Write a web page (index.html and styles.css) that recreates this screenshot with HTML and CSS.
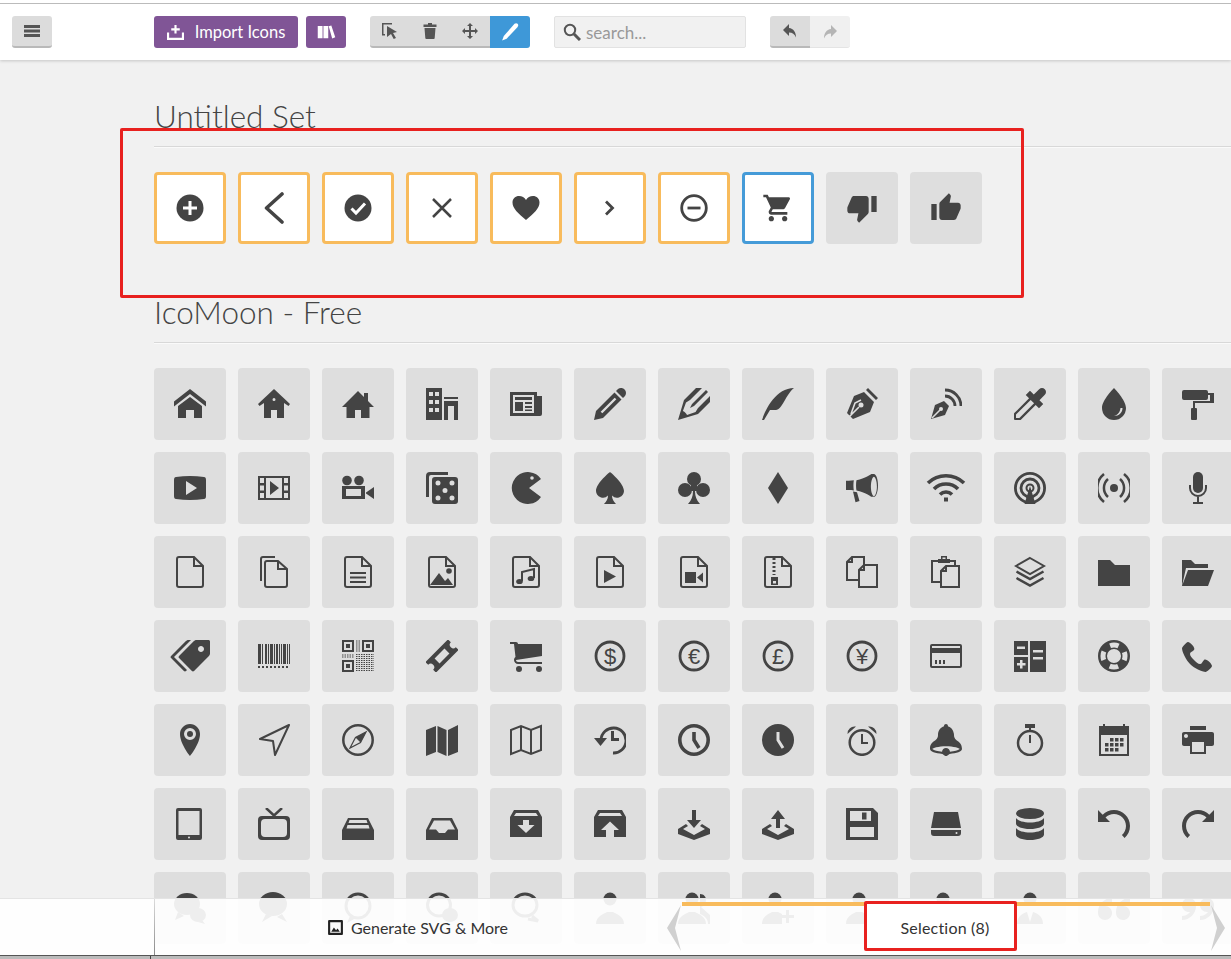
FILE: index.html
```html
<!DOCTYPE html>
<html lang="en">
<head>
    <meta charset="UTF-8">
    <title>IcoMoon App</title>
    <link rel="stylesheet" href="styles.css">
</head>
<body>
    <header class="topbar">
        <button class="btn btn-grey btn-menu"><svg class="tb" viewBox="0 0 16 16"><path d="M0 2h16v3H0zM0 6.500h16v3H0zM0 11h16v3H0z"/></svg></button>
        <button class="btn btn-purple btn-import"><svg class="tb tb-imp" viewBox="0 0 16 16"><path d="M7 1h2v3h3v2H9v3H7V6H4V4h3zM0 8h2v5h12V8h2v7H0z"/></svg>Import Icons</button>
        <button class="btn btn-purple btn-lib"><svg class="tb tb-lib" viewBox="0 0 20 16"><path d="M0 1h5.500v14H0zM6.500 1H12v14H6.500zM12.500 1.500l3-1L20 14l-3.500 1.500z"/></svg></button>
        <div class="group">
            <button class="btn btn-grey"><svg class="tb" viewBox="0 0 16 16"><path d="M0 0h10v1.500H1.500V11H3v1.500H0zM5 3l10 6-4 1 3 5-2.300 1-2.700-5L5 14z"/></svg></button>
            <button class="btn btn-grey"><svg class="tb" viewBox="0 0 16 16"><path d="M6 0h4v1.500h4.500v2.500h-13V1.500H6zM2.500 5h11l-.8 10a1 1 0 0 1-1 1H4.300a1 1 0 0 1-1-1z"/></svg></button>
            <button class="btn btn-grey"><svg class="tb" viewBox="0 0 16 16"><path d="M8 0l3 3H9v4h4V5l3 3-3 3V9H9v4h2l-3 3-3-3h2V9H3v2L0 8l3-3v2h4V3H5z"/></svg></button>
            <button class="btn btn-blue"><svg class="tb tb-pen" viewBox="0 0 32 32"><path d="M24 1.500c2-1.500 4-1.500 5.500 0s1.500 3.500 0 5.500L10 28l-8 3 3-8z"/></svg></button>
        </div>
        <label class="search">
            <svg class="search-ico" viewBox="0 0 18 18"><circle cx="7" cy="7" r="5.200"/><path class="search-handle" d="M11 11l6 6"/></svg>
            <input class="search-input" placeholder="search...">
        </label>
        <div class="group">
            <button class="btn btn-grey"><svg class="tb" viewBox="0 0 16 16"><path d="M7 1L1 7l6 6V9.500c3.500 0 5.500 1.500 7 5 0-5.500-2.500-9-7-9.500z"/></svg></button>
            <button class="btn btn-off"><svg class="tb" viewBox="0 0 16 16"><path d="M9 1l6 6-6 6V9.500c-3.500 0-5.500 1.500-7 5 0-5.500 2.500-9 7-9.500z"/></svg></button>
        </div>
    </header>

    <main class="main">
        <section class="set">
            <h2 class="set-title">Untitled Set</h2>
            <div class="grid">
                <div class="tile picked"><svg class="ico" viewBox="0 0 32 32"><circle cx="16" cy="16" r="13.500"/><path class="knock" d="M9 16h14M16 9v14"/></svg></div>
                <div class="tile picked"><svg class="ico" viewBox="0 0 32 32"><path class="line w36 round" d="M24 2L8.500 16 24 30"/></svg></div>
                <div class="tile picked"><svg class="ico" viewBox="0 0 32 32"><circle cx="16" cy="16" r="13.500"/><path class="knock" d="M9.500 16.500l4.500 4.500 9-9.500"/></svg></div>
                <div class="tile picked"><svg class="ico" viewBox="0 0 32 32"><path class="line w25" d="M7 7l18 18M25 7L7 25"/></svg></div>
                <div class="tile picked"><svg class="ico" viewBox="0 0 32 32"><path d="M16 28C8 21 2.500 16.500 2.500 10.500 2.500 6.500 5.500 4 9 4c3 0 5.500 1.500 7 4 1.500-2.500 4-4 7-4 3.500 0 6.500 2.500 6.500 6.500 0 6-5.500 10.500-13.500 17.500z"/></svg></div>
                <div class="tile picked"><svg class="ico" viewBox="0 0 32 32"><path class="line w28" d="M12 9.500l6.500 6.500-6.500 6.500"/></svg></div>
                <div class="tile picked"><svg class="ico" viewBox="0 0 32 32"><circle class="line w28" cx="16" cy="16" r="12.300"/><path class="line w28" d="M9.500 16h13"/></svg></div>
                <div class="tile current"><svg class="ico" viewBox="0 0 24 24"><path d="M7 18c-1.100 0-1.990.9-1.990 2S5.900 22 7 22s2-.9 2-2-.9-2-2-2zM1 2v2h2l3.600 7.590-1.350 2.450c-.16.28-.25.61-.25.96 0 1.100.9 2 2 2h12v-2H7.420c-.14 0-.25-.11-.25-.25l.03-.12.9-1.630h7.450c.75 0 1.410-.41 1.750-1.030l3.580-6.470c.08-.14.12-.31.12-.48 0-.55-.45-1-1-1H5.210l-.94-2H1zm16 16c-1.100 0-1.990.9-1.990 2s.89 2 1.990 2 2-.9 2-2-.9-2-2-2z"/></svg></div>
                <div class="tile"><svg class="ico" viewBox="0 0 24 24"><path d="M15 3H6c-.83 0-1.540.5-1.840 1.220l-3.020 7.050c-.09.23-.14.47-.14.73v1.910l.01.01L1 14c0 1.100.9 2 2 2h6.310l-.95 4.570-.03.32c0 .41.17.79.44 1.060L9.830 23l6.590-6.590c.36-.36.58-.86.58-1.410V5c0-1.100-.9-2-2-2zm4 0v12h4V3h-4z"/></svg></div>
                <div class="tile"><svg class="ico" viewBox="0 0 24 24"><path d="M1 21h4V9H1v12zm22-11c0-1.100-.9-2-2-2h-6.310l.95-4.570.03-.32c0-.41-.17-.79-.44-1.060L14.170 1 7.590 7.590C7.220 7.950 7 8.450 7 9v10c0 1.100.9 2 2 2h9c.83 0 1.540-.5 1.840-1.220l3.020-7.050c.09-.23.14-.47.14-.73v-2z"/></svg></div>
            </div>
        </section>

        <section class="set">
            <h2 class="set-title">IcoMoon - Free</h2>
            <div class="grid">
                <!-- row 1 -->
                <div class="tile"><svg class="ico" viewBox="0 0 32 32"><path d="M32 18.451l-16-12.420-16 12.420v-5.064l16-12.420 16 12.420zM28 18v12h-8v-8h-8v8h-8v-12l12-9z"/></svg></div>
                <div class="tile"><svg class="ico" viewBox="0 0 32 32"><path d="M16 1L0 16l1.500 2L6 15v15h7v-8h6v8h7V15l4.500 3 1.500-2zM16 10a1.500 1.500 0 1 1 0 3 1.500 1.500 0 0 1 0-3z"/></svg></div>
                <div class="tile"><svg class="ico" viewBox="0 0 32 32"><path d="M16 3L0 19h4.500v11H13v-8h6v8h8.500V19H32l-6-6V5h-4v4z"/></svg></div>
                <div class="tile"><svg class="ico" viewBox="0 0 32 32"><path d="M0 0h16v32H0zM3 4v4h4V4zM9 4v4h4V4zM3 12v4h4v-4zM9 12v4h4v-4zM3 20v4h4v-4zM9 20v4h4v-4zM18 9h14v2H18zM18 13h14v19h-4V18h-6v14h-4z"/></svg></div>
                <div class="tile"><svg class="ico" viewBox="0 0 32 32"><path d="M0 4h27v4h5v18a2 2 0 0 1-2 2H0zM3 7v18h21V7zM5 9h17v3H5zM5 14h8v9H5zM15 14h7v2h-7zM15 18h7v2h-7zM15 21.500h7v1.500h-7z"/></svg></div>
                <div class="tile"><svg class="ico" viewBox="0 0 32 32"><path d="M27 0c2.761 0 5 2.239 5 5 0 1.126-.372 2.164-1 3l-2 2-7-7 2-2c.836-.628 1.874-1 3-1zM2 23l-2 9 9-2 18.500-18.500-7-7-18.500 18.500zM22.362 11.362l-14 14-1.724-1.724 14-14 1.724 1.724z"/></svg></div>
                <div class="tile"><svg class="ico" viewBox="0 0 32 32"><path d="M12 20l4-2 14-14-2-2-14 14-2 4zM9.041 27.097c-.989-2.085-2.052-3.149-4.137-4.137l3.097-8.525 4-2.435 12-12h-6l-12 12-6 20 20-6 12-12v-6l-12 12-2.435 4z"/></svg></div>
                <div class="tile"><svg class="ico" viewBox="0 0 32 32"><path d="M0 32c4-12 14.469-32 32-32-8.219 6.594-12 22-18 22s-6 0-6 0l-6 10h-2z"/></svg></div>
                <div class="tile"><svg class="ico" viewBox="0 0 32 32"><path d="M22 0l10 10-2 2L20 2zM18 4l10 10-4 10L7 31l-6-6L8 8z"/><path class="cut" d="M2 30l11-11M5 26l4-11 6-3"/><circle class="hole" cx="15" cy="17" r="2.500"/></svg></div>
                <div class="tile"><svg class="ico" viewBox="0 0 32 32"><path d="M1 31l4-14 9-4 5 5-4 9z"/><path class="cut" d="M2 30l8-8"/><circle class="hole" cx="11" cy="21" r="2"/><path class="line w28" d="M15 8a10 10 0 0 1 10 10M15 2a16 16 0 0 1 16 16"/></svg></div>
                <div class="tile"><svg class="ico" viewBox="0 0 32 32"><path d="M30.828 1.172c-1.562-1.562-4.095-1.562-5.657 0l-5.379 5.379-3.793-3.793-4.243 4.243 3.326 3.326-14.754 14.754c-.252.252-.358.592-.322.921h-.008v5c0 .552.448 1 1 1h5c0 0 .083 0 .125 0 .288 0 .576-.11.795-.329l14.754-14.754 3.326 3.326 4.243-4.243-3.793-3.793 5.379-5.379c1.562-1.562 1.562-4.095 0-5.657zM5.409 30h-3.409v-3.409l14.674-14.674 3.409 3.409-14.674 14.674z"/></svg></div>
                <div class="tile"><svg class="ico" viewBox="0 0 32 32"><path d="M16 0S4 12 4 20a12 12 0 0 0 24 0C28 12 16 0 16 0zM24.500 20c0 4.500-3.500 8-8.500 8 3.500-1 6-3.500 6.500-8z"/></svg></div>
                <div class="tile"><svg class="ico" viewBox="0 0 32 32"><path d="M2 2h22a2 2 0 0 1 2 2v6a2 2 0 0 1-2 2H2a2 2 0 0 1-2-2V4a2 2 0 0 1 2-2zM26 5h6v10H13v5h1a1 1 0 0 1 1 1v10a1 1 0 0 1-1 1h-4a1 1 0 0 1-1-1V21a1 1 0 0 1 1-1h1v-7h17V7h-2z"/></svg></div>
                <!-- row 2 -->
                <div class="tile"><svg class="ico" viewBox="0 0 32 32"><path d="M2 5q14-2 28 0 2 0 2 3v16q0 3-2 3-14 2-28 0-2 0-2-3V8q0-3 2-3zM12 9v14l11-7z"/></svg></div>
                <div class="tile"><svg class="ico" viewBox="0 0 32 32"><path d="M0 4h32v24H0zM2 6v5h4V6zM2 13.500v5h4v-5zM2 21v5h4v-5zM26 6v5h4V6zM26 13.500v5h4v-5zM26 21v5h4v-5zM8 6v20h16V6zM12 9l9 7-9 7z"/></svg></div>
                <div class="tile"><svg class="ico" viewBox="0 0 32 32"><circle cx="5" cy="8.500" r="4.800"/><circle cx="17" cy="8.500" r="4.800"/><path d="M0 14h23v13H0zM4 17v7h15v-7zM24 20.500l8-5.500v12l-8-5.500z"/></svg></div>
                <div class="tile"><svg class="ico" viewBox="0 0 32 32"><path d="M4 0h18v3H5a2 2 0 0 0-2 2v20H0V4a4 4 0 0 1 4-4z"/><path d="M9 5h20a3 3 0 0 1 3 3v21a3 3 0 0 1-3 3H9a3 3 0 0 1-3-3V8a3 3 0 0 1 3-3zM12 8.500a2.500 2.500 0 1 0 0 5 2.500 2.500 0 0 0 0-5zM26 8.500a2.500 2.500 0 1 0 0 5 2.500 2.500 0 0 0 0-5zM19 16a2.500 2.500 0 1 0 0 5 2.500 2.500 0 0 0 0-5zM12 23.500a2.500 2.500 0 1 0 0 5 2.500 2.500 0 0 0 0-5zM26 23.500a2.500 2.500 0 1 0 0 5 2.500 2.500 0 0 0 0-5z"/></svg></div>
                <div class="tile"><svg class="ico" viewBox="0 0 32 32"><path d="M31 7A16 16 0 1 0 31 25L19 16zM22 4.200a1.800 1.800 0 1 1 0 3.600 1.800 1.800 0 0 1 0-3.600z"/></svg></div>
                <div class="tile"><svg class="ico" viewBox="0 0 32 32"><path d="M16 0S2 11 2 19a7 7 0 0 0 12 4.500Q14 28 10 32h12q-4-4-4-8.500A7 7 0 0 0 30 19C30 11 16 0 16 0z"/></svg></div>
                <div class="tile"><svg class="ico" viewBox="0 0 32 32"><circle cx="16" cy="7" r="7"/><circle cx="7" cy="18" r="7"/><circle cx="25" cy="18" r="7"/><path d="M13 10h6v5l3 4h-5q0 8 5 13H10q5-5 5-13h-5l3-4z"/></svg></div>
                <div class="tile"><svg class="ico" viewBox="0 0 32 32"><path d="M16 0l10 16-10 16L6 16z"/></svg></div>
                <div class="tile"><svg class="ico" viewBox="0 0 32 32"><path d="M32 13.414c0-6.279-1.837-11.373-4.109-11.413h-2.565s-6.088 4.573-14.851 6.367c-.268 1.415-.438 3.102-.438 5.047s.171 3.631.438 5.047c8.763 1.794 14.851 6.367 14.851 6.367h2.565c2.272-.04 4.109-5.134 4.109-11.415zM27.891 24.128c-.293 0-.61-.304-.773-.486-.395-.439-.775-1.124-1.1-1.979-.727-1.913-1.127-4.478-1.127-7.223s.4-5.309 1.127-7.223c.325-.855.705-1.540 1.100-1.979.163-.182.48-.486.773-.486s.61.304.773.486c.395.439.775 1.124 1.100 1.979.727 1.913 1.127 4.479 1.127 7.223s-.4 5.309-1.127 7.223c-.325.855-.705 1.540-1.100 1.979-.163.181-.48.486-.773.486zM7.418 13.414c0-1.755.137-3.459.398-5.044-1.708.229-3.249.401-5.012.401H0v9.287h2.804c1.763 0 3.304.172 5.012.401-.26-1.585-.398-3.289-.398-5.044zM7 19.500l4 .8 2.500 8.700-4 1.200z"/></svg></div>
                <div class="tile"><svg class="ico ico-w" viewBox="0 0 40 32"><path class="line w36" d="M2 11a26 26 0 0 1 36 0M8 17a17 17 0 0 1 24 0M14 22.500a8.500 8.500 0 0 1 12 0"/><path d="M18 25.500h4v4h-4z"/></svg></div>
                <div class="tile"><svg class="ico" viewBox="0 0 32 32"><circle class="line w28" cx="16" cy="16" r="14.600"/><circle class="line w28" cx="16" cy="16" r="9"/><circle class="line w2" cx="16" cy="16" r="3.500"/><path d="M16 14l5.500 18h-11z"/></svg></div>
                <div class="tile"><svg class="ico" viewBox="0 0 32 32"><circle cx="16" cy="16" r="4"/><path class="line w25" d="M10 7a12 12 0 0 0 0 18M22 7a12 12 0 0 1 0 18M6 2a18 18 0 0 0 0 28M26 2a18 18 0 0 1 0 28"/></svg></div>
                <div class="tile"><svg class="ico" viewBox="0 0 32 32"><path d="M16 0a5 5 0 0 1 5 5v11a5 5 0 0 1-10 0V5a5 5 0 0 1 5-5z"/><path class="line w2" d="M8 13v3a8 8 0 0 0 16 0v-3M16 24v7M11 31h10"/></svg></div>
                <!-- row 3 -->
                <div class="tile"><svg class="ico" viewBox="0 0 32 32"><path class="line" d="M5 1h15l9 9v19a2 2 0 0 1-2 2H5a2 2 0 0 1-2-2V3a2 2 0 0 1 2-2zM20 1v9h9"/></svg></div>
                <div class="tile"><svg class="ico" viewBox="0 0 32 32"><path class="line" d="M3 25V3a2 2 0 0 1 2-2h12M9 5h11l9 8v16a2 2 0 0 1-2 2H9a2 2 0 0 1-2-2V7a2 2 0 0 1 2-2zM20 5v8h9"/></svg></div>
                <div class="tile"><svg class="ico" viewBox="0 0 32 32"><path class="line" d="M5 1h15l9 9v19a2 2 0 0 1-2 2H5a2 2 0 0 1-2-2V3a2 2 0 0 1 2-2zM20 1v9h9M8 17h16M8 21.500h16M8 26h16"/></svg></div>
                <div class="tile"><svg class="ico" viewBox="0 0 32 32"><path class="line" d="M5 1h15l9 9v19a2 2 0 0 1-2 2H5a2 2 0 0 1-2-2V3a2 2 0 0 1 2-2zM20 1v9h9"/><circle cx="23" cy="15" r="2.800"/><path d="M4 29l9-12 6 8 3-3 5 7z"/></svg></div>
                <div class="tile"><svg class="ico" viewBox="0 0 32 32"><path class="line" d="M5 1h15l9 9v19a2 2 0 0 1-2 2H5a2 2 0 0 1-2-2V3a2 2 0 0 1 2-2zM20 1v9h9M12 25V16l12-3v9"/><ellipse cx="9.500" cy="25.500" rx="3.300" ry="2.600"/><ellipse cx="21" cy="22.500" rx="3.300" ry="2.600"/></svg></div>
                <div class="tile"><svg class="ico" viewBox="0 0 32 32"><path class="line" d="M5 1h15l9 9v19a2 2 0 0 1-2 2H5a2 2 0 0 1-2-2V3a2 2 0 0 1 2-2zM20 1v9h9"/><path d="M10 14l12 6.500L10 27z"/></svg></div>
                <div class="tile"><svg class="ico" viewBox="0 0 32 32"><path class="line" d="M5 1h15l9 9v19a2 2 0 0 1-2 2H5a2 2 0 0 1-2-2V3a2 2 0 0 1 2-2zM20 1v9h9"/><path d="M7 16h11v11H7zM19 21.500l6-5v10z"/></svg></div>
                <div class="tile"><svg class="ico" viewBox="0 0 32 32"><path class="line" d="M5 1h15l9 9v19a2 2 0 0 1-2 2H5a2 2 0 0 1-2-2V3a2 2 0 0 1 2-2zM20 1v9h9"/><path class="line w3 zip" d="M12 2v17"/><path d="M9 21h7v8H9zM11 25v2.500h3V25z"/></svg></div>
                <div class="tile"><svg class="ico" viewBox="0 0 32 32"><path class="line" d="M13 24H1V6l5-5h12v8M6 1v5H1M13 14v17h18V9H18zM18 9v5h-5"/></svg></div>
                <div class="tile"><svg class="ico" viewBox="0 0 32 32"><path class="line" d="M11 26H2V5h7M18 5h7v5M11 15v16h18V10H16zM16 10v5h-5"/><path d="M8 3h3V0h6v3h3v4H8zM12.500 1.500V3h3V1.500z"/></svg></div>
                <div class="tile"><svg class="ico" viewBox="0 0 32 32"><path class="line" d="M16 2l14 8-14 8-14-8z"/><path class="line w25" d="M2.500 15.500L16 23l13.500-7.500M2.500 22L16 29.500 29.500 22"/></svg></div>
                <div class="tile"><svg class="ico" viewBox="0 0 32 32"><path d="M0 4h12l5 5h15v21H0z"/></svg></div>
                <div class="tile"><svg class="ico" viewBox="0 0 32 32"><path d="M26 30l6-16H6L0 30zM4 12L0 30V4h9l4 4h13v4z"/></svg></div>
                <!-- row 4 -->
                <div class="tile"><svg class="ico ico-w" viewBox="0 0 40 32"><path d="M38.500 0h-12c-.825 0-1.977.477-2.561 1.061L9.040 15.960c-.583.583-.583 1.538 0 2.121l12.879 12.879c.583.583 1.538.583 2.121 0L38.939 16.060c.583-.583 1.061-1.736 1.061-2.561v-12C40 .675 39.325 0 38.500 0zM31 12c-1.657 0-3-1.343-3-3s1.343-3 3-3 3 1.343 3 3-1.343 3-3 3z"/><path d="M4 17L21 0h-2.500c-.825 0-1.977.477-2.561 1.061L1.040 15.960c-.583.583-.583 1.538 0 2.121l12.879 12.879c.583.583 1.538.583 2.121 0l.939-.939z"/></svg></div>
                <div class="tile"><svg class="ico" viewBox="0 0 32 32"><path d="M0 4h3v20H0zM4 4h1v20H4zM7 4h2v20H7zM10 4h1v20h-1zM12 4h3v20h-3zM16 4h1v20h-1zM18 4h2v20h-2zM21 4h1v20h-1zM23 4h1v20h-1zM25 4h3v20h-3zM29 4h1v20h-1zM31 4h1v20h-1z"/><path class="line dots" d="M0 27h32"/></svg></div>
                <div class="tile"><svg class="ico" viewBox="0 0 32 32"><path d="M0 0h12v12H0zM2 2v8h8V2zM4 4h4v4H4zM20 0h12v12H20zM22 2v8h8V2zM24 4h4v4h-4zM0 20h12v12H0zM2 22v8h8v-8zM4 24h4v4H4z"/><path class="line specks" d="M14 14.500h18M14 16.500h18M14 18.500h18M14 20.500h18M14 22.500h18M14 24.500h18M14 26.500h18M14 28.500h18M14 30.500h18M14 1h4M14 3h4M14 5h4M14 7h4M14 9h4M14 11h4M0 15h12M0 17h12"/></svg></div>
                <div class="tile"><svg class="ico" viewBox="0 0 32 32"><path transform="rotate(-45 16 16)" d="M0 8.500h32v4a3.500 3.500 0 0 0 0 7v4H0v-4a3.500 3.500 0 0 0 0-7zM9 12.500v7h14v-7z"/></svg></div>
                <div class="tile"><svg class="ico" viewBox="0 0 32 32"><path d="M12 29a3 3 0 1 1-6 0 3 3 0 0 1 6 0zM32 29a3 3 0 1 1-6 0 3 3 0 0 1 6 0zM32 16V4H8c0-1.105-.895-2-2-2H0v2h4l1.502 12.877C4.587 17.612 4 18.737 4 20c0 2.209 1.791 4 4 4h24v-2H8c-1.105 0-2-.895-2-2v-.021z"/></svg></div>
                <div class="tile"><svg class="ico" viewBox="0 0 32 32"><circle class="line w28" cx="16" cy="16" r="14"/><text class="sym" x="16" y="23.500">$</text></svg></div>
                <div class="tile"><svg class="ico" viewBox="0 0 32 32"><circle class="line w28" cx="16" cy="16" r="14"/><text class="sym" x="16" y="23.500">€</text></svg></div>
                <div class="tile"><svg class="ico" viewBox="0 0 32 32"><circle class="line w28" cx="16" cy="16" r="14"/><text class="sym" x="16" y="23.500">£</text></svg></div>
                <div class="tile"><svg class="ico" viewBox="0 0 32 32"><circle class="line w28" cx="16" cy="16" r="14"/><text class="sym" x="16" y="23.500">¥</text></svg></div>
                <div class="tile"><svg class="ico" viewBox="0 0 32 32"><path d="M2 4h28a2 2 0 0 1 2 2v20a2 2 0 0 1-2 2H2a2 2 0 0 1-2-2V6a2 2 0 0 1 2-2zM2 6v2h28V6zM2 13v13h28V13zM5 20h2v4H5zM9 20h2v4H9zM13 20h2v4h-2z"/></svg></div>
                <div class="tile"><svg class="ico" viewBox="0 0 32 32"><path d="M0 1h14v14H0zM3 6.500V9h8V6.500zM0 17h14v15H0zM6 20v3H3v2.500h3v3h2.500v-3h3V23h-3v-3zM16 1h16v31H16zM19 10v2.500h10V10zM19 17v2.500h10V17z"/></svg></div>
                <div class="tile"><svg class="ico" viewBox="0 0 32 32"><circle class="line ring-d" cx="16" cy="16" r="11.500"/><circle class="line ring-l" cx="16" cy="16" r="11"/></svg></div>
                <div class="tile"><svg class="ico" viewBox="0 0 32 32"><path d="M22 20c-2 2-2 4-4 4s-4-2-6-4-4-4-4-6 2-2 4-4-4-8-6-8-6 6-6 6c0 4 4.109 12.109 8 16s12 8 16 8c0 0 6-4 6-6s-6-8-8-6z"/></svg></div>
                <!-- row 5 -->
                <div class="tile"><svg class="ico" viewBox="0 0 32 32"><path d="M16 0C10.477 0 6 4.477 6 10c0 10 10 22 10 22s10-12 10-22c0-5.523-4.477-10-10-10zM16 16a6 6 0 1 1 0-12 6 6 0 0 1 0 12z"/><circle cx="16" cy="10" r="3"/></svg></div>
                <div class="tile"><svg class="ico" viewBox="0 0 32 32"><path class="line w2 round" d="M31 1L2 15l13 2 2 14z"/></svg></div>
                <div class="tile"><svg class="ico" viewBox="0 0 32 32"><circle class="line w25" cx="16" cy="16" r="14.700"/><path d="M24 8L13.500 13.500l5 5z"/><path class="line thin" d="M24 8l-5.500 10.500L8 24l5.500-10.500z"/></svg></div>
                <div class="tile"><svg class="ico" viewBox="0 0 32 32"><path d="M0 6l10-4v26L0 32zM11.500 2l9 4v26l-9-4zM22 6l10-5v27l-10 4z"/></svg></div>
                <div class="tile"><svg class="ico" viewBox="0 0 32 32"><path class="line w2" d="M1 6l10-4 10 4 10-4v24l-10 4-10-4-10 4zM11 2v24M21 6v24"/></svg></div>
                <div class="tile"><svg class="ico" viewBox="0 0 32 32"><path class="line w28" d="M7 16a12.500 12.500 0 1 1 12 13"/><path d="M0 14h13l-6.500 8zM17 7h3v7h5v3h-8z"/></svg></div>
                <div class="tile"><svg class="ico" viewBox="0 0 32 32"><circle class="line w36" cx="16" cy="16" r="14.200"/><path class="line w36" d="M16 8v8l5 8"/></svg></div>
                <div class="tile"><svg class="ico" viewBox="0 0 32 32"><circle cx="16" cy="16" r="16"/><path class="cut cut-3" d="M16 8v8l5 8"/></svg></div>
                <div class="tile"><svg class="ico" viewBox="0 0 32 32"><circle class="line w25" cx="16" cy="18.500" r="12.300"/><path class="line" d="M16 10v9h6"/><path d="M1.500 10A7 7 0 0 1 10 2.600zM30.500 10A7 7 0 0 0 22 2.600z"/></svg></div>
                <div class="tile"><svg class="ico" viewBox="0 0 32 32"><path d="M32 25c0-9-8-7-8-14 0-.58-.056-1.076-.158-1.498-.526-3.532-2.88-6.366-5.930-7.230.027-.123.041-.251.041-.382C17.953.851 17.100 0 16 0s-2 .851-2 1.891c0 .131.014.258.041.382-3.421.969-5.966 4.416-6.039 8.545V11c0 7-8 5-8 14 0 2.382 5.331 4.375 12.468 4.878C13.752 31.138 15.453 32 16 32s2.250-.862 3.532-2.122C26.669 29.375 32 27.381 32 25zM25.820 26.691c-1.695.452-3.692.777-5.837.958C19.805 25.605 18.090 24 15.999 24s-3.805 1.604-3.984 3.648c-2.144-.18-4.142-.506-5.837-.958C3.846 26.068 2.731 25.372 2.323 25c.408-.372 1.523-1.068 3.855-1.691C8.890 22.585 12.377 22.187 15.998 22.187s7.109.398 9.820 1.122c2.332.622 3.447 1.318 3.855 1.691-.408.372-1.523 1.068-3.855 1.691z"/></svg></div>
                <div class="tile"><svg class="ico" viewBox="0 0 32 32"><circle class="line w25" cx="16" cy="19" r="12"/><path d="M11 0h10v4H11zM15 4h2v4h-2zM15 11h2v8h-2z"/></svg></div>
                <div class="tile"><svg class="ico" viewBox="0 0 32 32"><path d="M1 2h4V0h2v2h18V0h2v2h4v30H1zM3 11v19h26V11zM12 14h3.500v3.500H12zM17 14h3.500v3.500H17zM22 14h3.500v3.500H22zM7 19h3.500v3.500H7zM12 19h3.500v3.500H12zM17 19h3.500v3.500H17zM22 19h3.500v3.500H22zM7 24h3.500v3.500H7zM12 24h3.500v3.500H12zM17 24h3.500v3.500H17z"/></svg></div>
                <div class="tile"><svg class="ico" viewBox="0 0 32 32"><path d="M8 2h16v4H8zM30 8H2c-1.100 0-2 .9-2 2v10c0 1.100.9 2 2 2h6v8h16v-8h6c1.100 0 2-.9 2-2V10c0-1.100-.9-2-2-2zM4 14c-1.105 0-2-.895-2-2s.895-2 2-2 2 .895 2 2-.895 2-2 2zM22 28H10V18h12v10z"/></svg></div>
                <!-- row 6 -->
                <div class="tile"><svg class="ico" viewBox="0 0 32 32"><path d="M4 0h22a2 2 0 0 1 2 2v28a2 2 0 0 1-2 2H4a2 2 0 0 1-2-2V2a2 2 0 0 1 2-2zM4.500 3v24h21V3zM15 28.500a1 1 0 1 0 0 2 1 1 0 0 0 0-2z"/></svg></div>
                <div class="tile"><svg class="ico" viewBox="0 0 32 32"><path class="line w25" d="M8 0l8 7.500L24 0"/><path d="M4 8h24q4 0 4 4v16q0 4-4 4H4q-4 0-4-4V12q0-4 4-4zM7 11q-4 0-4 4v10q0 4 4 4h18q4 0 4-4V15q0-4-4-4z"/></svg></div>
                <div class="tile"><svg class="ico" viewBox="0 0 32 32"><path d="M6 10h20l6 12v10H0V22zM7.500 12h17l1 3h-19zM5.500 17h21l1 3.500h-23z"/></svg></div>
                <div class="tile"><svg class="ico" viewBox="0 0 32 32"><path d="M0 32V22l6-12h20l6 12v10zM8 12.500l-5 9h7l3 3.500h6l3-3.500h7l-5-9z"/></svg></div>
                <div class="tile"><svg class="ico" viewBox="0 0 32 32"><path d="M4 2h24l4 7v20H0V9zM6 5L4 8h24l-2-3zM16 25l8.500-8H19v-5h-6v5H7.500z"/></svg></div>
                <div class="tile"><svg class="ico" viewBox="0 0 32 32"><path d="M4 2h24l4 7v20H0V9zM6 5L4 8h24l-2-3zM16 13.500L7 22h5v7h8v-7h5z"/></svg></div>
                <div class="tile"><svg class="ico" viewBox="0 0 32 32"><path d="M14 2h4v10h5l-7 8-7-8h5z"/><path d="M0 21l8-5 2 2-5 3 11 6 11-6-5-3 2-2 8 5v5l-16 6-16-6z"/></svg></div>
                <div class="tile"><svg class="ico" viewBox="0 0 32 32"><path d="M16 2l7 9h-5v9h-4v-9H9z"/><path d="M0 21l8-5 2 2-5 3 11 6 11-6-5-3 2-2 8 5v5l-16 6-16-6z"/></svg></div>
                <div class="tile"><svg class="ico" viewBox="0 0 32 32"><path d="M0 0h27l5 5v27H0zM4 3v10h21V3zM16 4.500h4.500v7H16zM4 19v10h24V19z"/></svg></div>
                <div class="tile"><svg class="ico" viewBox="0 0 32 32"><path d="M4 4h24l3 16H1zM1 22h30v3a3 3 0 0 1-3 3H4a3 3 0 0 1-3-3zM26.500 24a1 1 0 1 0 0 2 1 1 0 0 0 0-2z"/></svg></div>
                <div class="tile"><svg class="ico" viewBox="0 0 32 32"><ellipse cx="16" cy="5.500" rx="14" ry="5.500"/><path d="M2 10v5.500C2 18.500 8 21 16 21s14-2.500 14-5.500V10c-2 3-8 4.500-14 4.500S4 13 2 10zM2 20v6.500C2 29.500 8 32 16 32s14-2.500 14-5.500V20c-2 3-8 4.500-14 4.500S4 23 2 20z"/></svg></div>
                <div class="tile"><svg class="ico" viewBox="0 0 32 32"><path d="M16 2c-4.418 0-8.418 1.791-11.313 4.687L0 2v12h12L7.515 9.515C9.687 7.343 12.687 6 16 6c6.627 0 12 5.373 12 12 0 3.584-1.572 6.801-4.063 9l2.646 3C29.905 27.068 32 22.779 32 18c0-8.837-7.163-16-16-16z"/></svg></div>
                <div class="tile"><svg class="ico" viewBox="0 0 32 32"><path d="M0 18c0 4.779 2.095 9.068 5.417 12l2.646-3C5.572 24.801 4 21.584 4 18 4 11.373 9.373 6 16 6c3.314 0 6.313 1.343 8.485 3.515L20 14h12V2l-4.687 4.687C24.418 3.791 20.418 2 16 2 7.163 2 0 9.163 0 18z"/></svg></div>
                <!-- row 7, mostly under the dock -->
                <div class="tile"><svg class="ico" viewBox="0 0 32 32"><ellipse cx="13" cy="12" rx="13" ry="11"/><path d="M4 20l-3 8 9-4z"/><ellipse cx="24" cy="23" rx="8" ry="7"/><path d="M28 28l3 4-7-2z"/></svg></div>
                <div class="tile"><svg class="ico" viewBox="0 0 32 32"><ellipse cx="15" cy="12" rx="14" ry="12"/><path d="M8 22l-4 8 10-6zM24 22l5 8-10-5z"/></svg></div>
                <div class="tile"><svg class="ico" viewBox="0 0 32 32"><circle class="line w3" cx="16" cy="14" r="12"/><path d="M8 24l-3 7 9-5z"/></svg></div>
                <div class="tile"><svg class="ico" viewBox="0 0 32 32"><ellipse class="line w3" cx="13" cy="13" rx="11.500" ry="11"/><ellipse cx="24" cy="23" rx="8" ry="7"/></svg></div>
                <div class="tile"><svg class="ico" viewBox="0 0 32 32"><ellipse class="line w3" cx="15" cy="13" rx="12" ry="11"/><path class="line w3" d="M22 24l6 5-10-2"/></svg></div>
                <div class="tile"><svg class="ico" viewBox="0 0 32 32"><circle cx="16" cy="7" r="6.500"/><path d="M2 32c0-8 8-10 11-12h6c3 2 11 4 11 12z"/></svg></div>
                <div class="tile"><svg class="ico" viewBox="0 0 32 32"><circle cx="14" cy="7" r="6.500"/><path d="M0 32c0-8 8-10 11-12h6c3 2 11 4 11 12z"/><path d="M22 2c4 0 6 3 6 6s-2 6-5 7l9 8v9h-2c0-5-3-8-8-10z"/></svg></div>
                <div class="tile"><svg class="ico" viewBox="0 0 32 32"><circle cx="13" cy="7" r="6.500"/><path d="M0 32c0-8 7-10 10-12h6l4 2v10z"/><path d="M24 18h3v5h5v3h-5v5h-3v-5h-5v-3h5z"/></svg></div>
                <div class="tile"><svg class="ico" viewBox="0 0 32 32"><circle cx="13" cy="7" r="6.500"/><path d="M0 32c0-8 7-10 10-12h6l4 2v10zM20 24h12v3H20z"/></svg></div>
                <div class="tile"><svg class="ico" viewBox="0 0 32 32"><circle cx="13" cy="7" r="6.500"/><path d="M0 32c0-8 7-10 10-12h6l2 1v11z"/><path class="line w25" d="M19 25l4 4 8-9"/></svg></div>
                <div class="tile"><svg class="ico" viewBox="0 0 32 32"><circle cx="16" cy="7" r="6.500"/><path d="M3 32c0-8 6-11 10-12l3 10 3-10c4 1 10 4 10 12z"/></svg></div>
                <div class="tile"><svg class="ico" viewBox="0 0 32 32"><path d="M7.031 14c3.866 0 7 3.134 7 7s-3.134 7-7 7-7-3.134-7-7l-.031-1c0-7.732 6.268-14 14-14v4c-2.671 0-5.182 1.040-7.071 2.929-.364.364-.695.751-.995 1.157.357-.056.724-.086 1.097-.086zM25.031 14c3.866 0 7 3.134 7 7s-3.134 7-7 7-7-3.134-7-7l-.031-1c0-7.732 6.268-14 14-14v4c-2.671 0-5.182 1.040-7.071 2.929-.364.364-.695.751-.995 1.157.357-.056.724-.086 1.097-.086z"/></svg></div>
                <div class="tile"><svg class="ico" viewBox="0 0 32 32"><path transform="rotate(180 16 17)" d="M7.031 14c3.866 0 7 3.134 7 7s-3.134 7-7 7-7-3.134-7-7l-.031-1c0-7.732 6.268-14 14-14v4c-2.671 0-5.182 1.040-7.071 2.929-.364.364-.695.751-.995 1.157.357-.056.724-.086 1.097-.086zM25.031 14c3.866 0 7 3.134 7 7s-3.134 7-7 7-7-3.134-7-7l-.031-1c0-7.732 6.268-14 14-14v4c-2.671 0-5.182 1.040-7.071 2.929-.364.364-.695.751-.995 1.157.357-.056.724-.086 1.097-.086z"/></svg></div>
            </div>
        </section>
    </main>

    <div class="mark mark-set"></div>

    <footer class="dock">
        <div class="dock-bar">
            <div class="dock-side"></div>
            <div class="tab"><svg class="tab-ico" viewBox="0 0 16 16"><path d="M2 1h12a1 1 0 0 1 1 1v12a1 1 0 0 1-1 1H2a1 1 0 0 1-1-1V2a1 1 0 0 1 1-1zM3 3v10h10V3zM4 12l2.500-4 2 2.500L10 9l2 3z"/></svg>Generate SVG &amp; More</div>
            <div class="tab tab-sel"><span class="tab-label">Selection (8)</span></div>
            <svg class="chev chev-l" viewBox="0 0 15 46"><path d="M14 0L0 23l14 23-6-23z"/></svg>
            <svg class="chev chev-r" viewBox="0 0 15 46"><path d="M1 0l14 23L1 46l6-23z"/></svg>
            <div class="mark mark-sel"></div>
        </div>
        <div class="dock-strip"></div>
    </footer>
</body>
</html>
```

FILE: styles.css
```css
* {
    box-sizing: border-box;
}

html, body {
    margin: 0;
    height: 100%;
}

body {
    position: relative;
    height: 100vh;
    overflow: hidden;
    background-color: #f1f1f1;
    font-family: Lato, "Open Sans", sans-serif;
    color: #444;
}

/* top toolbar */
.topbar {
    position: relative;
    z-index: 2;
    display: flex;
    height: 60px;
    padding: 16px 0 0 12px;
    background: linear-gradient(#fff 3px, #bbb 3px, #bbb 4px, #fff 4px);
    box-shadow: 0 1px 3px rgba(0,0,0,0.18);
}

.btn {
    display: flex;
    align-items: center;
    justify-content: center;
    width: 40px;
    height: 32px;
    padding: 0;
    border: 0;
    border-radius: 3px;
    font: inherit;
}

.btn-grey {
    background: #dcdcdc;
    border-bottom: 2px solid #b9b9b9;
    fill: #555;
}

.btn-off {
    background: #f0f0f0;
    border-bottom: 1px solid #e4e4e4;
    fill: #b5b5b5;
}

.btn-purple {
    background: #805596;
    fill: #fff;
    color: #fff;
    font-size: 16.500px;
}

.btn-blue {
    background: #3e98d8;
    fill: #fff;
}

.tb {
    width: 16px;
    height: 16px;
}

.tb-imp {
    width: 17px;
    height: 17px;
}

.tb-lib {
    width: 19px;
    height: 14px;
}

.tb-pen {
    width: 18px;
    height: 18px;
}

.btn-menu {
    margin-right: 102px;
}

.btn-import {
    gap: 11px;
    width: 144px;
    margin-right: 8px;
}

.btn-lib {
    margin-right: 24px;
}

.group {
    display: flex;
    margin-right: 24px;
}

.group .btn {
    border-radius: 0;
}

.group .btn:first-child {
    border-radius: 3px 0 0 3px;
}

.group .btn:last-child {
    border-radius: 0 3px 3px 0;
}

.search {
    display: flex;
    align-items: center;
    gap: 5px;
    width: 192px;
    height: 32px;
    margin-right: 24px;
    padding-left: 8px;
    background: #f1f1f1;
    border: 1px solid #e2e2e2;
    border-radius: 2px;
}

.search-ico {
    flex: none;
    width: 18px;
    height: 18px;
    fill: none;
    stroke: #555;
    stroke-width: 2;
}

.search-handle {
    stroke-width: 3;
}

.search-input {
    width: 150px;
    border: 0;
    padding: 0;
    background: none;
    font: inherit;
    font-size: 17px;
}

.search-input::placeholder {
    color: #999;
}

/* icon sets */
.main {
    padding-left: 154px;
}

.set {
    margin-bottom: 50px;
}

.set:first-child {
    padding-top: 38px;
}

.set-title {
    margin: 0 0 25px;
    padding-bottom: 12px;
    border-bottom: 1px solid #d8d8d8;
    box-shadow: 0 1px 0 #fafafa;
    font-size: 31.500px;
    font-weight: 300;
    line-height: 36px;
}

.grid {
    display: grid;
    grid-template-columns: repeat(13, 72px);
    gap: 12px;
}

.tile {
    display: flex;
    align-items: center;
    justify-content: center;
    width: 72px;
    height: 72px;
    background: #dedede;
    border-radius: 4px;
}

.tile.picked {
    background: #fff;
    border: 3px solid #f8bb5c;
}

.tile.current {
    background: #fff;
    border: 3px solid #459bd8;
}

.ico {
    flex: none;
    width: 32px;
    height: 32px;
    fill: #444;
    fill-rule: evenodd;
}

.ico-w {
    width: 40px;
}

.line {
    fill: none;
    stroke: #444;
    stroke-width: 2;
}

.w2 { stroke-width: 2; }
.w25 { stroke-width: 2.5; }
.w28 { stroke-width: 2.8; }
.w3 { stroke-width: 3; }
.w36 { stroke-width: 3.6; }
.thin { stroke-width: 1.2; }

.round {
    stroke-linecap: round;
    stroke-linejoin: round;
}

.knock {
    fill: none;
    stroke: #fff;
    stroke-width: 3;
}

.cut {
    fill: none;
    stroke: #dedede;
    stroke-width: 1.6;
}

.cut-3 {
    stroke-width: 3;
}

.hole {
    fill: #dedede;
}

.zip {
    stroke-dasharray: 2 2;
}

.dots {
    stroke-dasharray: 2 2;
}

.specks {
    stroke-width: 1.2;
    stroke-dasharray: 1.5 1;
}

.ring-d {
    stroke-width: 9;
}

.ring-l {
    stroke: #dedede;
    stroke-width: 5;
    stroke-dasharray: 8.640 8.640;
    stroke-dashoffset: 4.320;
}

.sym {
    font-family: "Liberation Sans", sans-serif;
    font-size: 22px;
    text-anchor: middle;
}

/* bottom dock */
.dock {
    position: absolute;
    left: 0;
    right: 0;
    bottom: 0;
    z-index: 3;
}

.dock-bar {
    position: relative;
    display: flex;
    height: 57px;
    background: rgba(255,255,255,0.91);
    border-top: 1px solid #e4e4e4;
    font-size: 16px;
    color: #333;
}

.dock-strip {
    height: 4px;
    border-top: 1px solid #555;
    background: linear-gradient(#444, #444) 150px 0 / 1px 100% no-repeat, #bbb;
}

.dock-side {
    width: 155px;
    border-right: 1px solid;
    border-image: linear-gradient(#ddd, #888) 1;
}

.tab {
    display: flex;
    align-items: center;
    justify-content: center;
    gap: 7px;
    width: 525px;
}

.tab-ico {
    width: 17px;
    height: 17px;
    fill: #222;
    fill-rule: evenodd;
}

.tab-sel {
    width: 528px;
    margin: 3px 0 0 2px;
    padding: 0 2px 7px 0;
    border-top: 4px solid #f8bb5c;
}

.tab-label {
    position: relative;
    z-index: 2;
    letter-spacing: 0.200px;
}

.chev {
    position: absolute;
    top: 6px;
    width: 15px;
    height: 46px;
    fill: #d0d0d0;
}

.chev-l {
    left: 667px;
}

.chev-r {
    left: 1210px;
}

/* red annotation boxes */
.mark {
    position: absolute;
    border: 3px solid #e8211f;
    border-radius: 2px;
}

.mark-set {
    top: 128px;
    left: 120px;
    z-index: 1;
    width: 904px;
    height: 170px;
}

.mark-sel {
    top: 2px;
    left: 864px;
    width: 153px;
    height: 50px;
    background: #fff;
}
```
